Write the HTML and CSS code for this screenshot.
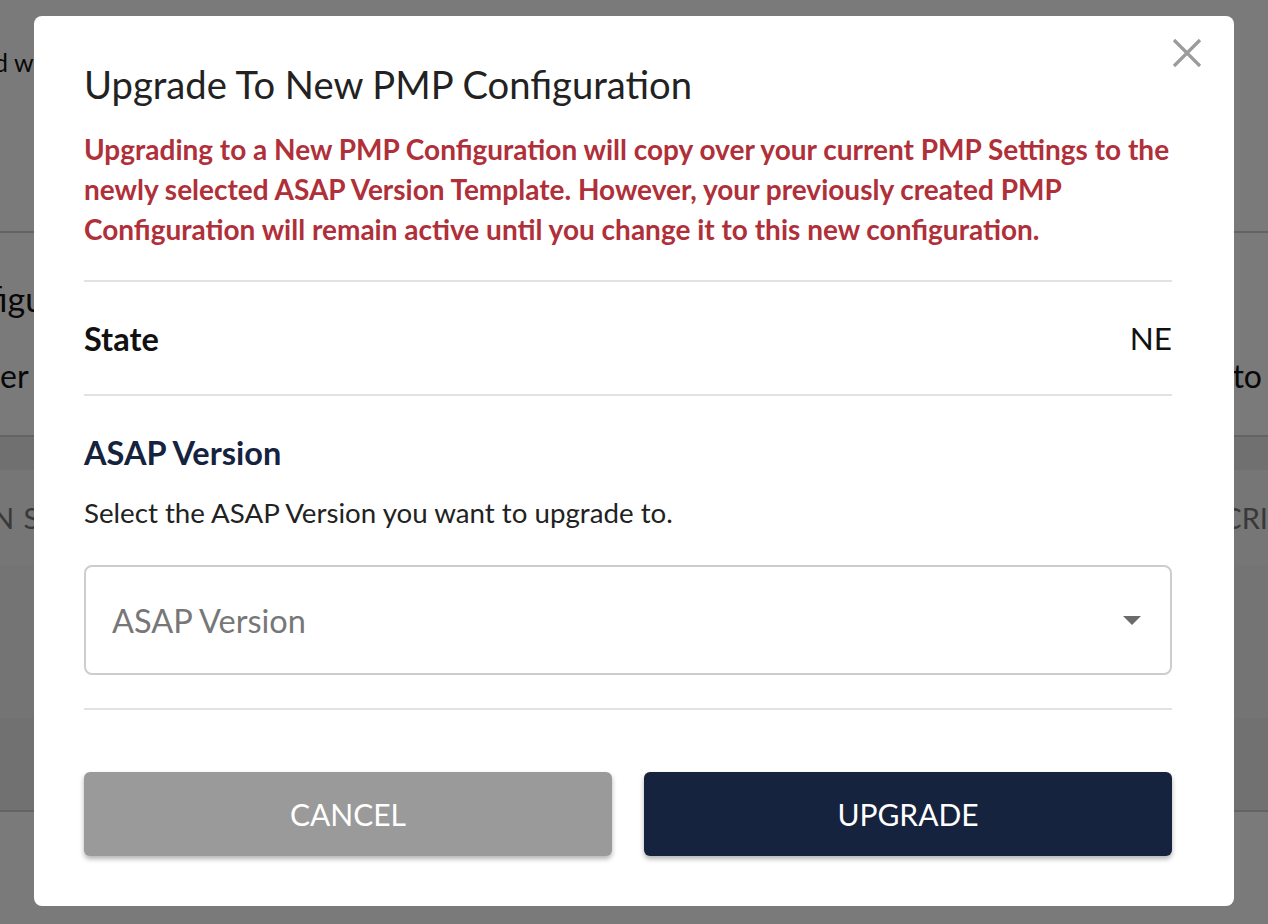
FILE: index.html
```html
<!DOCTYPE html>
<html>
<head>
<meta charset="utf-8">
<link rel="stylesheet" href="styles.css">
</head>
<body>
<div class="page">
  <div class="pg-top"><p class="pg-lead">d wh</p></div>
  <div class="pg-section">
    <p class="pg-big">figu</p>
    <div class="pg-row"><span>er</span><span>to</span></div>
  </div>
  <div class="pg-band"></div>
  <div class="pg-card"><span class="pg-left">N S</span><span>CRI</span></div>
  <div class="pg-gap"></div>
  <div class="pg-band2"></div>
</div>
<div class="overlay"></div>
<div class="modal">
  <button class="close" aria-label="Close">
    <svg width="32" height="32" viewBox="0 0 32 32"><path d="M3 3 L29 29 M29 3 L3 29" stroke="#9b9b9b" stroke-width="3.2" fill="none"/></svg>
  </button>
  <h1 class="title">Upgrade To New PMP Configuration</h1>
  <p class="warning">Upgrading to a New PMP Configuration will copy over your current PMP Settings to the newly selected ASAP Version Template. However, your previously created PMP Configuration will remain active until you change it to this new configuration.</p>
  <div class="divider"></div>
  <div class="state-row"><span class="state-label">State</span><span class="state-value">NE</span></div>
  <div class="divider"></div>
  <h2 class="section-title">ASAP Version</h2>
  <p class="hint">Select the ASAP Version you want to upgrade to.</p>
  <div class="select"><span class="placeholder">ASAP Version</span><span class="caret"></span></div>
  <div class="divider divider-bottom"></div>
  <div class="actions">
    <button class="btn btn-cancel">CANCEL</button>
    <button class="btn btn-upgrade">UPGRADE</button>
  </div>
</div>
</body>
</html>
```
FILE: styles.css
```css
* { box-sizing: border-box; }
html, body { margin: 0; padding: 0; }
body {
  font-family: "Lato", "Liberation Sans", sans-serif;
  background: #fff;
  width: 1268px;
  height: 924px;
  overflow: hidden;
}
.page { width: 1268px; height: 924px; color: #111; }
.pg-top { height: 233px; border-bottom: 2px solid #cfcfcf; padding-top: 46px; }
.pg-lead { margin: 0 0 0 -6px; font-size: 25px; line-height: 32px; }
.pg-section { height: 204px; border-bottom: 2px solid #cfcfcf; padding-top: 46px; }
.pg-big { margin: 0 0 0 -12px; font-size: 34px; line-height: 40px; }
.pg-row { display: flex; justify-content: space-between; font-size: 32px; line-height: 38px; margin-top: 38px; padding-right: 6px; }
.pg-band { height: 33px; background: #ebebeb; }
.pg-card { height: 95px; background: #f6f6f6; display: flex; justify-content: space-between; align-items: center; font-size: 29px; color: #777; box-shadow: 0 3px 4px rgba(0,0,0,0.25); }
.pg-left { margin-left: -8px; letter-spacing: 1px; }
.pg-gap { height: 153px; background: #f2f2f2; }
.pg-band2 { height: 94px; background: #ececec; border-bottom: 2px solid #d0d0d0; }

.overlay { position: fixed; inset: 0; background: rgba(0,0,0,0.52); }

.modal {
  position: fixed;
  left: 34px; top: 16px;
  width: 1200px; height: 890px;
  background: #fff;
  border-radius: 8px;
  padding: 48px 62px 50px 50px;
  display: flex;
  flex-direction: column;
}
.close {
  position: absolute;
  top: 21px; right: 31px;
  width: 32px; height: 32px;
  padding: 0; border: 0; background: none;
}
.close svg { display: block; }
.title {
  margin: 0;
  font-size: 38.2px;
  line-height: 40px;
  font-weight: 400;
  color: #222;
}
.warning {
  margin: 25px -14px 0 0;
  font-size: 28px;
  line-height: 40px;
  font-weight: 700;
  color: #b0303a;
}
.divider { height: 2px; background: #e2e2e2; }
.warning + .divider { margin-top: 31px; }
.state-row {
  display: flex;
  justify-content: space-between;
  align-items: center;
  height: 112px;
  font-size: 32px;
  color: #111;
}
.state-label { font-weight: 700; font-size: 32.5px; }
.state-value { font-weight: 400; font-size: 31.5px; }
.section-title {
  margin: 40px 0 0;
  font-size: 32.5px;
  line-height: 34px;
  font-weight: 700;
  color: #16233f;
}
.hint {
  margin: 28px 0 0;
  font-size: 27.7px;
  line-height: 30px;
  color: #222;
}
.select {
  margin-top: 37px;
  height: 110px;
  border: 2px solid #cdcdcd;
  border-radius: 8px;
  display: flex;
  align-items: center;
  justify-content: space-between;
  padding: 0 29px 0 26px;
}
.placeholder { font-size: 32.5px; color: #777; }
.caret {
  width: 0; height: 0;
  border-left: 9px solid transparent;
  border-right: 9px solid transparent;
  border-top: 9px solid #6b6b6b;
}
.divider-bottom { margin-top: 33px; }
.actions {
  margin-top: 62px;
  display: flex;
  gap: 32px;
}
.btn {
  flex: 1;
  height: 84px;
  border: 0;
  border-radius: 6px;
  font-family: "Lato", "Liberation Sans", sans-serif;
  font-size: 30px;
  color: #fff;
  box-shadow: 0 3px 5px rgba(0,0,0,0.3);
}
.btn-cancel { background: #9a9a9a; }
.btn-upgrade { background: #16233f; }
```
